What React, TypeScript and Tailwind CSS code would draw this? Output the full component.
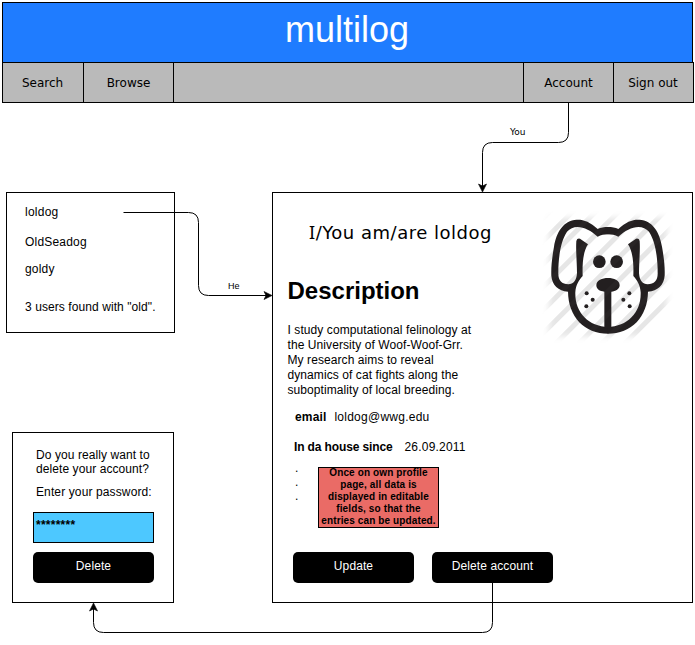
import type { ReactNode } from "react";

function NavItem({ className, children }: { className: string; children?: ReactNode }) {
  return (
    <div
      className={`flex h-[41px] shrink-0 items-center justify-center border-y border-l border-black font-['DejaVu_Sans',sans-serif] text-[12px] leading-[14px] ${className}`}
    >
      {children}
    </div>
  );
}

function Button({ children, className = "" }: { children: ReactNode; className?: string }) {
  return (
    <button
      className={`block h-[31px] w-[121px] shrink-0 rounded-[5px] bg-black pb-[3px] text-center text-[12px] leading-[14px] tracking-[0.1px] text-white ${className}`}
    >
      {children}
    </button>
  );
}

const STRIPES = [64, 133, 202, 271, 340, 409, 478, 547, 616, 685];

const HALF_HEAD =
  "M220 66 C207 66 197 68 188 72 C165 50 145 43 125 44 C85 46 64 82 57 125 C51 160 48 185 49 212 C51 240 70 258 99 260 C100 335 148 386 220 386 V366 C160 364 119 322 121 262 C122 240 132 225 143 213 C142 180 143 142 159 118 L135 101 Q126 99 124 108 C122 140 126 170 126 205 C124 228 115 237 100 238 C80 238 69 226 70 203 C70 160 76 110 96 80 C118 54 158 66 188 95 C198 90 208 88 220 88 Z";

function HalfFace() {
  return (
    <g fill="#231f20">
      <path d={HALF_HEAD} />
      <circle cx="193" cy="170" r="19" />
      <circle cx="155" cy="265" r="6" />
      <circle cx="173" cy="284" r="6" />
      <circle cx="154" cy="304" r="6" />
    </g>
  );
}

function Stripes() {
  return (
    <>
      {STRIPES.map((s) => (
        <line key={s} x1={s + 40} y1={-40} x2={s - 460} y2={460} />
      ))}
    </>
  );
}

function DogPicture() {
  return (
    <svg className="h-[145px] w-[150px]" viewBox="0 0 450 435">
      <defs>
        <filter id="soft" x="-20%" y="-20%" width="140%" height="140%">
          <feGaussianBlur stdDeviation="10" />
        </filter>
        <mask id="fade">
          <rect x="42" y="38" width="354" height="356" fill="white" filter="url(#soft)" />
        </mask>
      </defs>
      <g mask="url(#fade)" stroke="#e6e6e6" strokeWidth="15">
        <Stripes />
      </g>
      <HalfFace />
      <g transform="translate(438 0) scale(-1 1)">
        <HalfFace />
      </g>
      <path
        fill="#231f20"
        d="M184 241 C184 212 254 212 254 241 C254 252 242 260 229 260 V370 H208 V260 C194 259 184 252 184 241 Z"
      />
      <g mask="url(#fade)" stroke="#ffffff" strokeOpacity="0.025" strokeWidth="15">
        <Stripes />
      </g>
    </svg>
  );
}

function Connectors() {
  return (
    <svg className="pointer-events-none absolute inset-0 h-[645px] w-[695px]" viewBox="0 0 695 645">
      <g fill="none" stroke="black">
        <path d="M568.5 103V132.5Q568.5 142.5 558.5 142.5H492.5Q482.5 142.5 482.5 152.5V188" />
        <path d="M123.5 212.5H188.5Q198.5 212.5 198.5 222.5V285.5Q198.5 295.5 208.5 295.5H268" />
        <path d="M492.5 583V622.5Q492.5 632.5 482.5 632.5H103.5Q93.5 632.5 93.5 622.5V607" />
      </g>
      <path d="M482.5 192L478.5 184L482.5 186L486.5 184Z" stroke="black" strokeWidth="0.6" />
      <path d="M272 295.5L264 291.5L266 295.5L264 299.5Z" stroke="black" strokeWidth="0.6" />
      <path d="M93.5 603L89.5 611L93.5 609L97.5 611Z" stroke="black" strokeWidth="0.6" />
    </svg>
  );
}

export default function App() {
  return (
    <div className="relative h-[645px] w-[695px] overflow-hidden bg-white pt-[2px] pl-[2px] font-['Liberation_Sans',Arial,sans-serif] text-[12px] leading-[14px] whitespace-nowrap text-black">
      <header className="h-[60px] w-[691px] border border-b-0 border-black bg-[#1f7cff] pt-[6px] pr-px text-center text-[36px] leading-[42px] text-white">
        multilog
      </header>
      <nav className="flex w-[692px] bg-[#bababa]">
        <NavItem className="w-[81px] pr-px">Search</NavItem>
        <NavItem className="w-[90px]">Browse</NavItem>
        <NavItem className="w-[350px]" />
        <NavItem className="w-[90px]">Account</NavItem>
        <NavItem className="w-[81px] border-r pr-px">Sign out</NavItem>
      </nav>

      <div className="flex pt-[89px]">
        <div className="w-[270px] shrink-0">
          <section className="ml-[4px] h-[141px] w-[169px] border border-black pt-[12px] pl-[18px]">
            <p className="tracking-[0.25px]">loldog</p>
            <p className="mt-[16px] tracking-[0.2px]">OldSeadog</p>
            <p className="mt-[13px] tracking-[0.2px]">goldy</p>
            <p className="mt-[24px] tracking-[0.08px]">3 users found with "old".</p>
          </section>
          <section className="mt-[99px] ml-[10px] h-[171px] w-[162px] border border-black pt-[15px] pl-[20px]">
            <p className="pl-[3px] tracking-[0.08px]">
              Do you really want to
              <br />
              delete your account?
            </p>
            <p className="mt-[9px] pl-[3px] tracking-[0.12px]">Enter your password:</p>
            <div className="mt-[13px] h-[31px] w-[121px] border border-black bg-[#4dc8ff] pt-[5px] pl-[2px] font-bold tracking-[0.25px]">
              ********
            </div>
            <Button className="mt-[9px]">Delete</Button>
          </section>
        </div>

        <section className="h-[411px] w-[421px] shrink-0 border border-black pl-[15px]">
          <div className="flex h-[145px] justify-between">
            <div>
              <h1 className="mt-[28px] ml-[21px] font-['DejaVu_Sans',sans-serif] text-[18px] leading-[22px] tracking-[0.51px]">
                <span className="font-['Noto_Sans',sans-serif]">I</span>/You am/are loldog
              </h1>
              <h2 className="mt-[33px] -ml-[0.5px] text-[24px] leading-[28px] font-bold">Description</h2>
            </div>
            <div className="mt-[12px] mr-[7px] h-[145px] w-[150px]">
              <DogPicture />
            </div>
          </div>
          <p className="-mt-[15px] -ml-[0.5px] leading-[15px] tracking-[0.08px]">
            I study computational felinology at
            <br />
            the University of Woof-Woof-Grr.
            <br />
            My research aims to reveal
            <br />
            dynamics of cat fights along the
            <br />
            suboptimality of local breeding.
          </p>
          <div className="mt-[12px] ml-[7px] flex gap-[8px]">
            <b className="tracking-[0.15px]">email</b>
            <span className="tracking-[0.25px]">loldog@wwg.edu</span>
          </div>
          <div className="mt-[16px] ml-[6px] flex gap-[12px]">
            <b className="-tracking-[0.13px]">In da house since</b>
            <span className="tracking-[0.2px]">26.09.2011</span>
          </div>
          <div className="mt-[13px] ml-[7px] flex">
            <div className="-mt-[6px] w-[23px] leading-[14px]">
              <p>.</p>
              <p>.</p>
              <p>.</p>
            </div>
            <div className="h-[61px] w-[121px] border border-black bg-[#ea6b66] text-center text-[10px] leading-[12px] font-bold tracking-[0.12px]">
              <p className="-mt-px">
                Once on own profile
                <br />
                page, all data is
                <br />
                displayed in editable
                <br />
                fields, so that the
                <br />
                entries can be updated.
              </p>
            </div>
          </div>
          <div className="mt-[24px] ml-[5px] flex gap-[18px]">
            <Button>Update</Button>
            <Button>Delete account</Button>
          </div>
        </section>
      </div>

      <Connectors />
      <span className="absolute top-[127px] left-[510px] font-['DejaVu_Sans',sans-serif] text-[9px] leading-[10px]">You</span>
      <span className="absolute top-[281px] left-[228px] text-[9px] leading-[10px]">He</span>
    </div>
  );
}
